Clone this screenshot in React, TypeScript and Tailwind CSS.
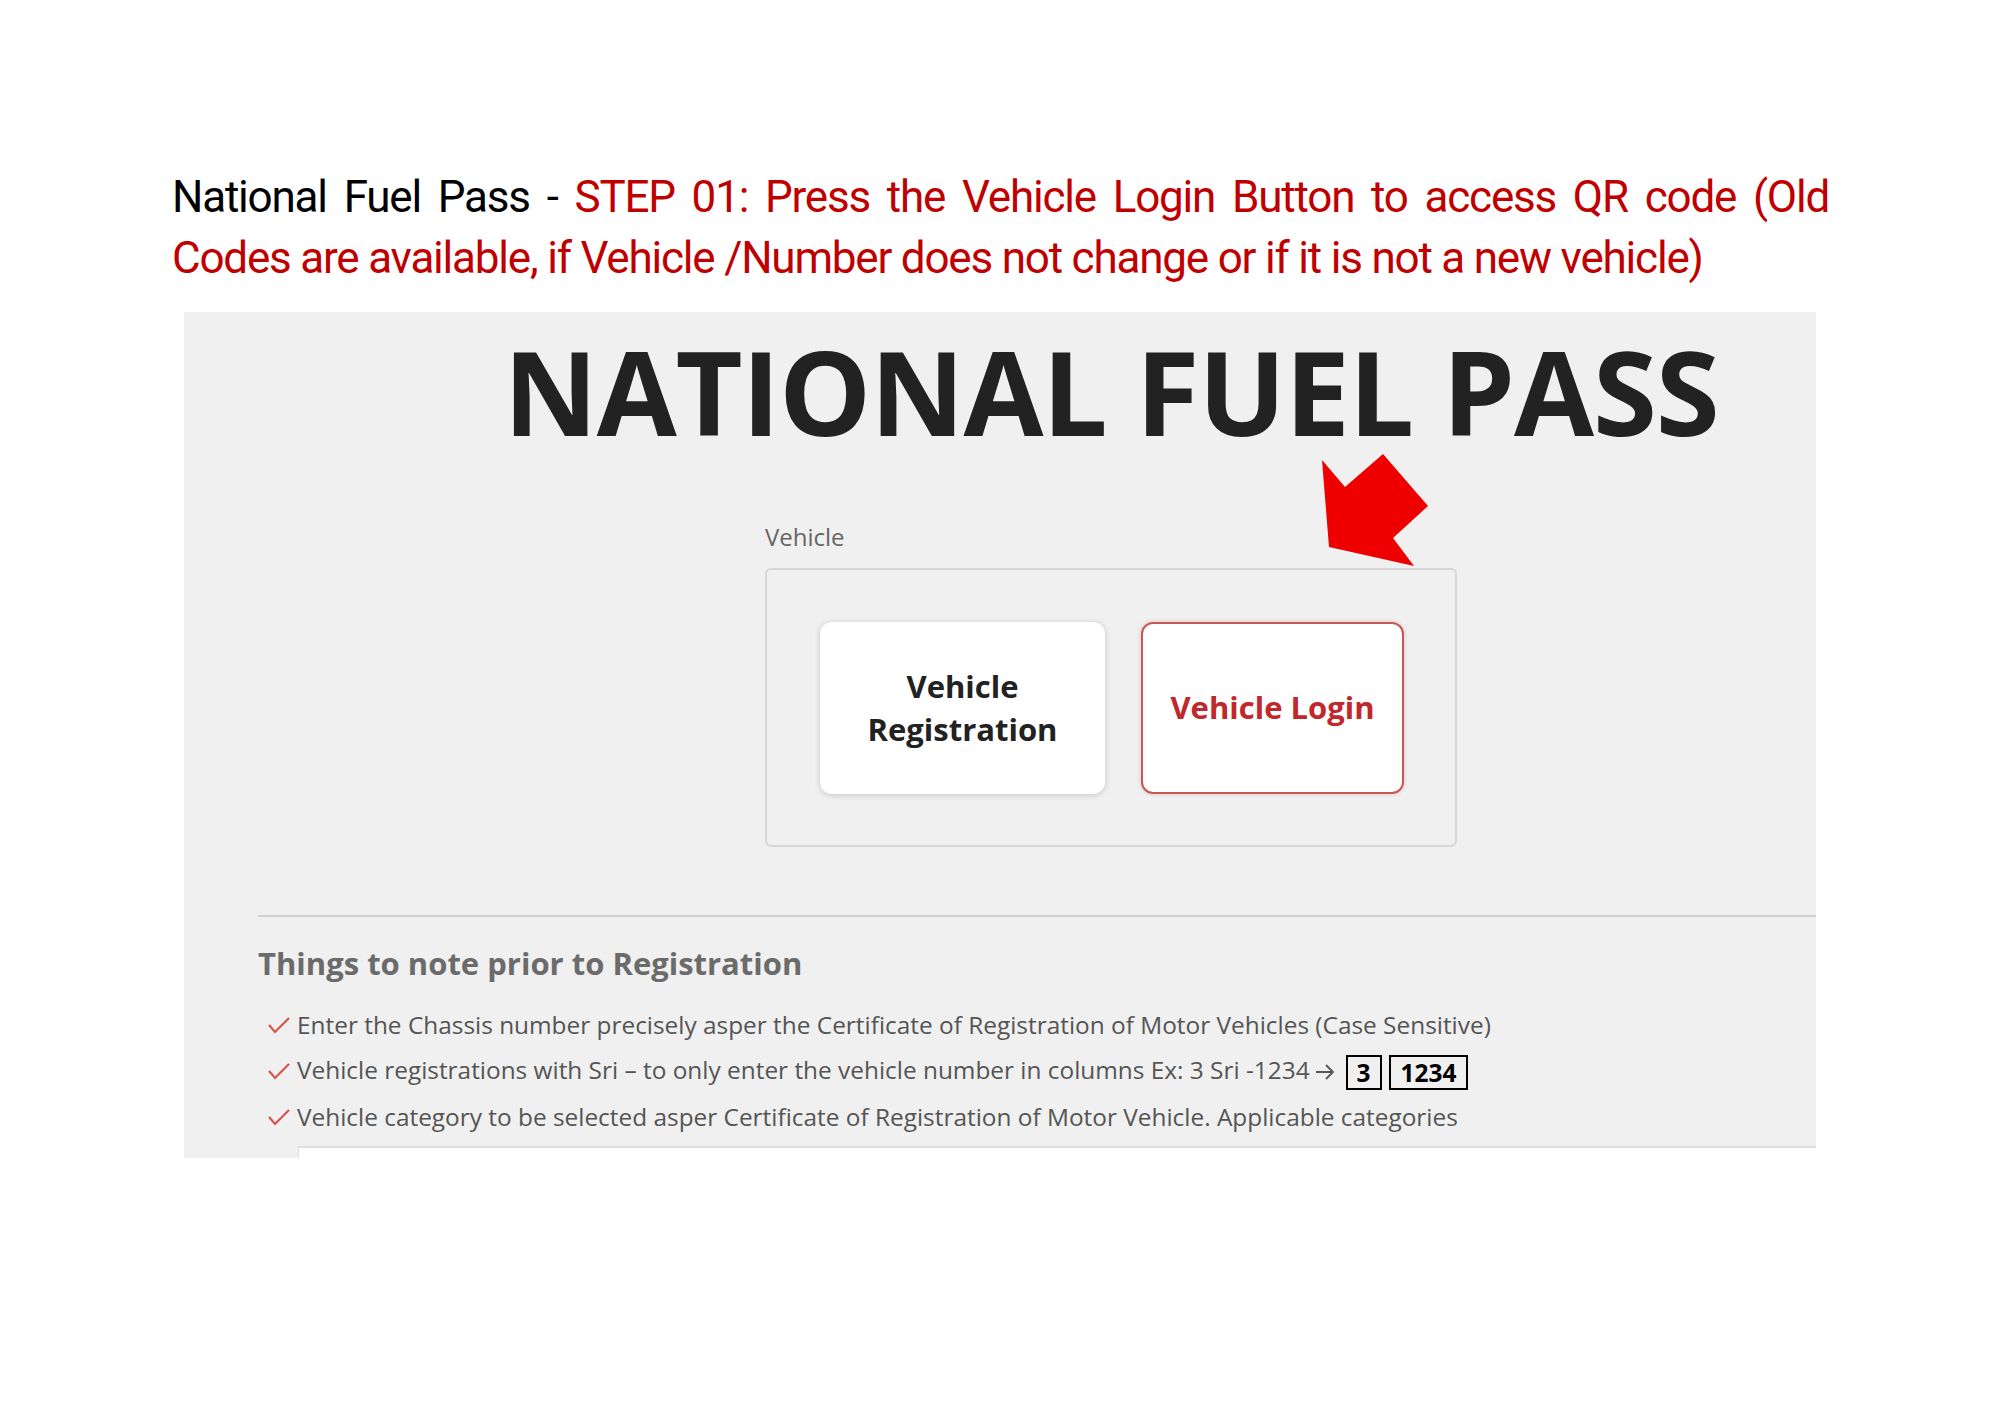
import React from 'react';

const ArrowRight: React.FC = () => (
  <svg width="22" height="18" viewBox="0 0 22 18" className="inline-block align-[-2px] ml-[4px]">
    <path d="M2 9 H19 M12 2 L19 9 L12 16" fill="none" stroke="#555" strokeWidth="1.8" />
  </svg>
);

const notes: React.ReactNode[] = [
  'Enter the Chassis number precisely asper the Certificate of Registration of Motor Vehicles (Case Sensitive)',
  <>
    Vehicle registrations with Sri – to only enter the vehicle number in columns Ex: 3 Sri -1234
    <ArrowRight />
    <span className="ml-[10px] inline-flex gap-[7px] align-middle">
      <span className="border-2 border-black px-[9px] leading-[31px] font-bold text-black">3</span>
      <span className="border-2 border-black px-[10px] leading-[31px] font-bold text-black">1234</span>
    </span>
  </>,
  'Vehicle category to be selected asper Certificate of Registration of Motor Vehicle. Applicable categories',
];

const Check: React.FC = () => (
  <svg width="24" height="18" viewBox="0 0 24 18" className="shrink-0">
    <polyline points="2,9 8,16 22,2" fill="none" stroke="#d9534f" strokeWidth="2.2" />
  </svg>
);

const Arrow: React.FC = () => (
  <svg width="114" height="120" viewBox="0 0 114 120" className="absolute left-[1318px] top-[450px]">
    <polygon points="4,10 27,37 65,4 110,56 75,88 96,116 11,97" fill="#ee0000" />
  </svg>
);

const App: React.FC = () => {
  return (
    <div className="relative w-[2000px] h-[1414px] bg-white">
      {/* caption above the screenshot */}
      <div className="pt-[167px] ml-[172px] w-[1657px] text-[44px] leading-[61px] tracking-[-1.2px] font-['Roboto',sans-serif]">
        <div className="whitespace-nowrap text-justify [text-align-last:justify]">
          <span className="text-black">National Fuel Pass - </span>
          <span className="text-[#c00000]">STEP 01: Press the Vehicle Login Button to access QR code (Old</span>
        </div>
        <div className="whitespace-nowrap text-[#c00000]">
          Codes are available, if Vehicle /Number does not change or if it is not a new vehicle)
        </div>
      </div>

      <div className="mt-[23px] ml-[184px] w-[1632px] h-[846px] bg-[#f0f0f0] overflow-hidden font-['Open_Sans',sans-serif]">
        <div className="pt-[21px] pl-[222px] flex flex-col items-center">
          <h1 className="text-[116px] leading-none font-bold tracking-[-1.1px] text-[#222]">NATIONAL FUEL PASS</h1>
          <div className="mt-[73px] w-[692px]">
            <div className="text-[24px] leading-[30px] text-[#666]">Vehicle</div>
            <div className="mt-[16px] h-[279px] border-2 border-[#d6d6d6] rounded-[6px] flex items-center pl-[53px] gap-[36px]">
              <button className="w-[285px] h-[172px] bg-white rounded-[12px] shadow-[0_1px_6px_rgba(0,0,0,0.18)] text-[31px] leading-[43px] font-bold text-[#222]">
                Vehicle
                <br />
                Registration
              </button>
              <button className="w-[263px] h-[172px] bg-white rounded-[12px] border-2 border-[#c45a58] shadow-[0_0_4px_rgba(200,60,60,0.25)] text-[31px] leading-[43px] font-bold text-[#c0282d]">
                Vehicle Login
              </button>
            </div>
          </div>
        </div>

        <div className="mt-[68px] ml-[74px]">
          <div className="border-t-2 border-[#d0d0d0]" />
          <h2 className="mt-[27px] text-[31px] leading-[38px] font-bold text-[#6b6b6b]">
            Things to note prior to Registration
          </h2>
          <ul className="mt-[20px] pl-[9px]">
            {notes.map((note, i) => (
              <li key={i} className="flex items-center gap-[6px] h-[46px] text-[24.4px] text-[#555]">
                <Check />
                <span>{note}</span>
              </li>
            ))}
          </ul>
          <div className="mt-[6px] ml-[40px] h-[20px] bg-white border-t-2 border-l border-[#dedede]" />
        </div>
      </div>

      <Arrow />
    </div>
  );
};

export default App;
